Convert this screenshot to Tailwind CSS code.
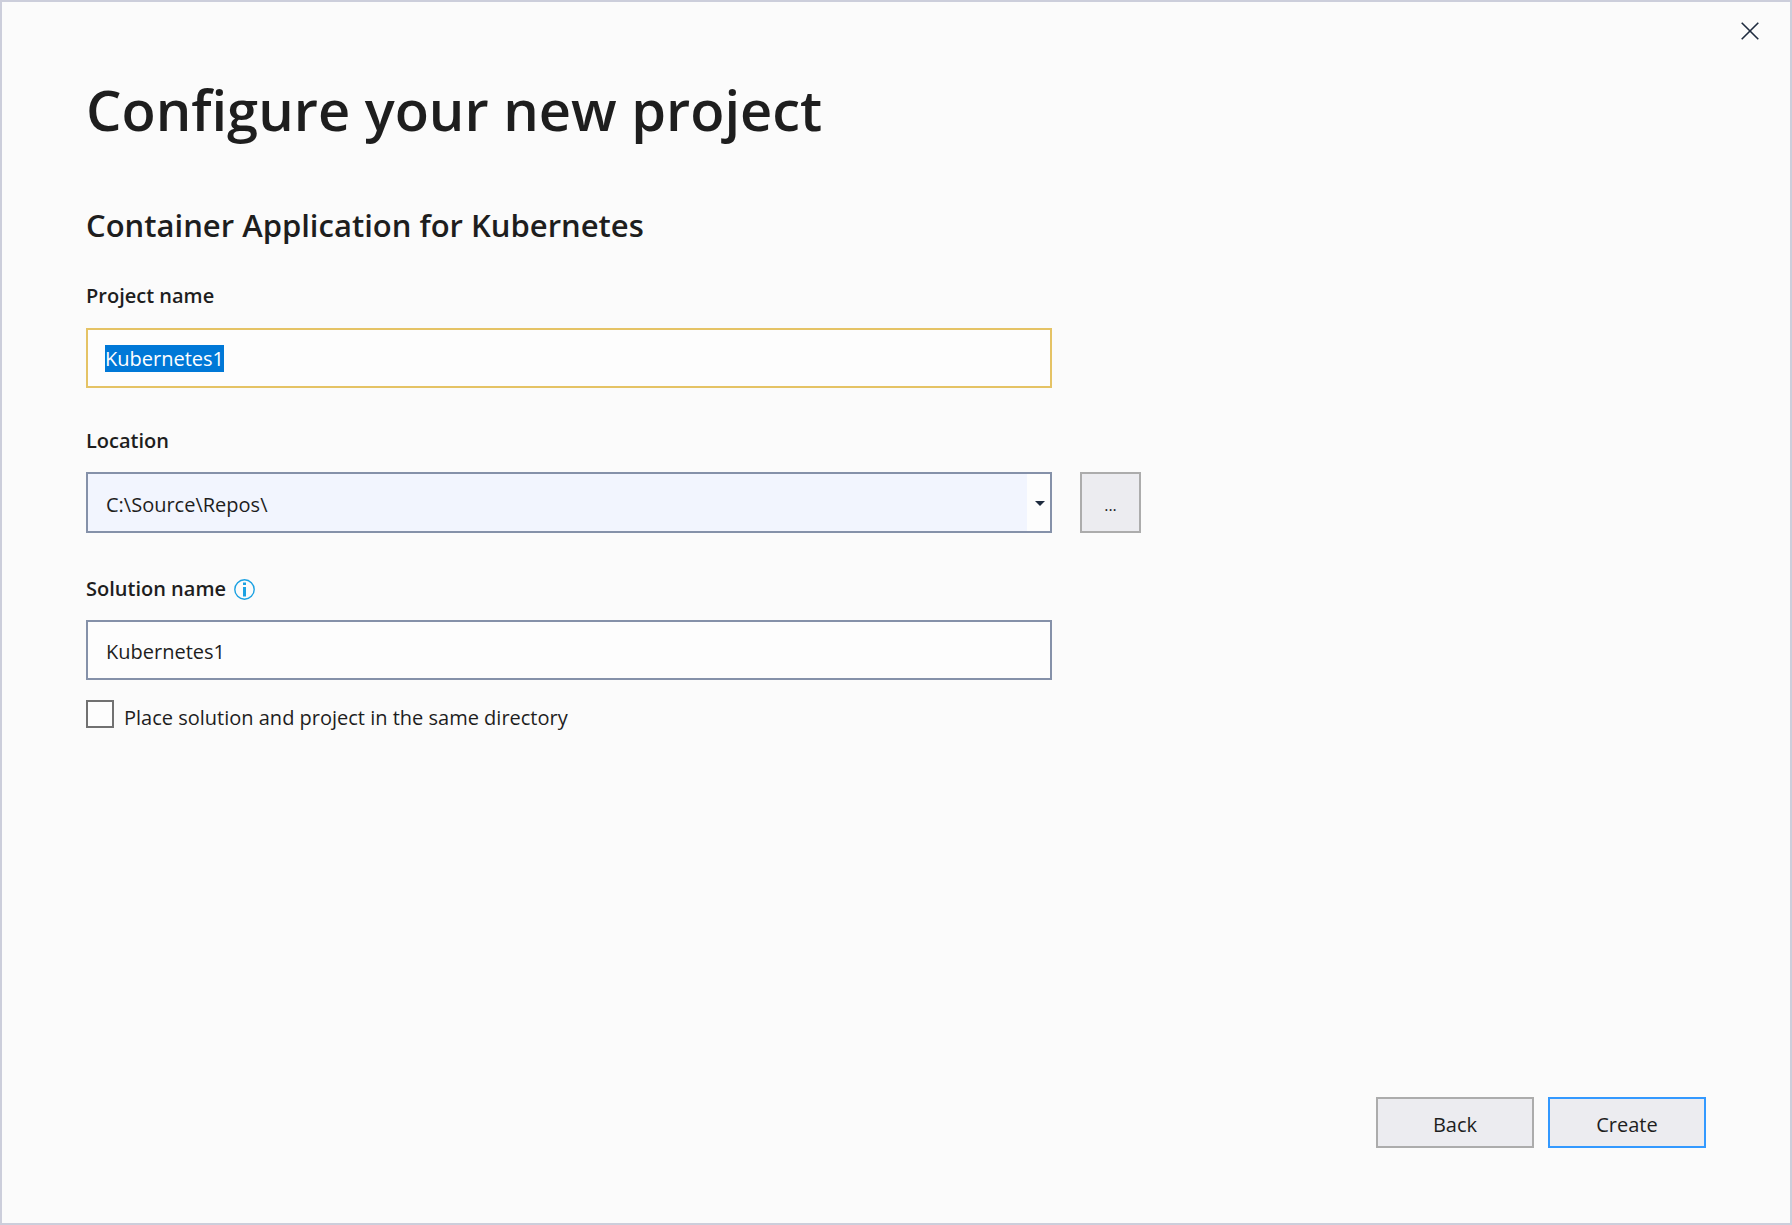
<!DOCTYPE html>
<html lang="en">
<head>
<meta charset="utf-8">
<meta name="viewport" content="width=device-width, initial-scale=1">
<title>Configure your new project</title>
<script src="https://cdn.jsdelivr.net/npm/@tailwindcss/browser@4"></script>
</head>
<body class="bg-[#fbfbfb] text-[#1e1e1e] font-['Segoe_UI','Open_Sans',sans-serif] text-[20px] leading-7">
<main class="flex min-h-screen flex-col border-2 border-[#cccedb]">
  <div class="flex justify-end px-6 pt-[13px]">
    <button type="button" aria-label="Close" class="flex size-8 items-center justify-center">
      <svg class="size-5" viewBox="0 0 20 20" fill="none" stroke="#1e2b3f" stroke-width="1.6" aria-hidden="true"><path d="M1.7 1.7 18.3 18.3M18.3 1.7 1.7 18.3"/></svg>
    </button>
  </div>
  <form class="flex flex-1 flex-col px-21 pb-[75px]">
    <h1 class="mt-[22px] text-[56px] leading-[80px] font-semibold">Configure your new project</h1>
    <h2 class="mt-[54px] text-[31px] leading-[44px] font-semibold">Container Application for Kubernetes</h2>

    <div class="mt-[35px] grid grid-cols-[minmax(0,966px)_61px] gap-x-7">
      <label for="project" class="font-semibold">Project name</label>
      <input id="project" type="text" value="Kubernetes1" autofocus class="col-start-1 mt-[18px] h-15 border-2 border-[#e5c365] bg-[#fdfdfd] px-[17px] outline-none selection:bg-[#0078d7] selection:text-white">

      <label for="location" class="col-start-1 mt-[39px] font-semibold">Location</label>
      <div class="relative col-start-1 mt-[17px]">
        <select id="location" class="block h-[61px] w-full appearance-none border-2 border-[#8591a9] bg-[#f2f5fe] px-[18px] pt-1 outline-none">
          <option>C:\Source\Repos\</option>
        </select>
        <span class="pointer-events-none absolute inset-y-0.5 right-0.5 flex w-[23px] items-center justify-end bg-[#fdfdfd] pt-0.5 pr-[5px]">
          <svg class="w-[10px]" viewBox="0 0 10 5" fill="#1e2b3f" aria-hidden="true"><path d="M0 0H10L5 5Z"/></svg>
        </span>
      </div>
      <button type="button" aria-label="Browse" class="mt-[17px] h-[61px] border-2 border-[#acacac] bg-[#ececf0] pt-1 text-[16px]">...</button>

      <div class="col-start-1 mt-[42px] flex items-center gap-2">
        <label for="solution" class="font-semibold">Solution name</label>
        <svg class="size-[21px]" viewBox="0 0 21 21" aria-hidden="true"><circle cx="10.5" cy="10.5" r="9.7" fill="none" stroke="#1ba1e2" stroke-width="1.4"/><path d="M9 3.5h3v2.6H9zM9 8h3v9.5H9z" fill="#1ba1e2"/></svg>
      </div>
      <input id="solution" type="text" value="Kubernetes1" class="col-start-1 mt-[17px] h-15 border-2 border-[#8591a9] bg-[#fdfdfd] px-[18px] pt-0.5 outline-none">
    </div>

    <div class="mt-5 flex items-start gap-[10px]">
      <input id="same" type="checkbox" class="size-7 appearance-none border-2 border-[#717171] bg-[#fdfdfd]">
      <label for="same" class="mt-1">Place solution and project in the same directory</label>
    </div>

    <div class="mt-auto flex justify-end gap-[14px]">
      <button type="button" class="h-[51px] w-[158px] border-2 border-[#acacac] bg-[#ececf0] pt-1">Back</button>
      <button type="submit" class="h-[51px] w-[158px] border-2 border-[#3399ff] bg-[#ececf0] pt-1">Create</button>
    </div>
  </form>
</main>
<script>
  const project = document.getElementById('project');
  project.focus();
  project.select();
</script>
</body>
</html>
